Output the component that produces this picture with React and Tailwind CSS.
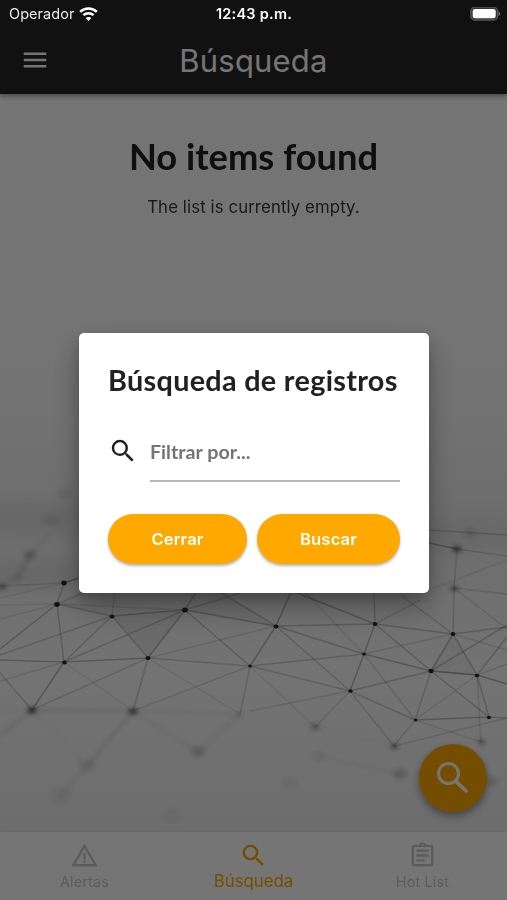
import React from 'react';
import { MdSearch, MdMenu, MdWarningAmber, MdOutlineAssignment } from 'react-icons/md';

const lines = [
  [0, 586, 64, 583, 0.3], [64, 583, 79, 578, 0.8], [64, 583, 57, 604, 0.4], [0, 598, 64, 583, 0.2],
  [0, 605, 57, 604, 0.2], [0, 649, 57, 604, 0.6], [0, 619, 57, 604, 0.25], [57, 604, 112, 616, 0.5],
  [57, 604, 90, 590, 0.3], [57, 604, 185, 610, 0.25], [57, 604, 64, 662, 0.5], [112, 616, 115, 592, 0.3],
  [112, 616, 185, 610, 0.6], [112, 616, 64, 662, 0.45], [112, 616, 148, 658, 0.45], [112, 616, 0, 655, 0.4],
  [185, 610, 148, 658, 0.6], [185, 610, 64, 662, 0.45], [185, 610, 250, 666, 0.5], [185, 610, 276, 626, 0.6],
  [185, 610, 196, 592, 0.5], [185, 610, 250, 590, 0.4], [220, 592, 276, 626, 0.45], [148, 658, 276, 626, 0.3],
  [0, 660, 64, 662, 0.6], [64, 662, 148, 658, 0.6], [148, 658, 250, 666, 0.4], [64, 662, 32, 710, 0.65],
  [0, 673, 32, 710, 0.4], [32, 710, 148, 658, 0.35], [148, 658, 133, 711, 0.45], [64, 662, 133, 711, 0.2],
  [0, 681, 64, 662, 0.25], [133, 711, 250, 666, 0.3], [250, 666, 240, 714, 0.35], [148, 658, 240, 714, 0.15],
  [250, 666, 276, 626, 0.65], [276, 626, 291, 592, 0.7], [276, 626, 375, 624, 0.5], [276, 626, 364, 654, 0.5],
  [276, 626, 350, 691, 0.4], [290, 590, 375, 624, 0.6], [305, 592, 364, 654, 0.25], [375, 624, 374, 592, 0.5],
  [375, 624, 364, 654, 0.6], [375, 624, 453, 634, 0.5], [375, 624, 431, 671, 0.5], [375, 624, 420, 600, 0.3],
  [364, 654, 350, 691, 0.65], [364, 654, 431, 671, 0.6], [364, 654, 250, 666, 0.4], [364, 654, 415, 720, 0.3],
  [364, 654, 453, 634, 0.3], [250, 666, 350, 691, 0.45], [350, 691, 431, 671, 0.5], [350, 691, 415, 720, 0.45],
  [350, 691, 315, 727, 0.3], [350, 691, 394, 746, 0.35], [350, 691, 250, 711, 0.3], [250, 666, 315, 727, 0.2],
  [431, 671, 453, 634, 0.6], [431, 671, 477, 675, 0.9], [431, 671, 507, 625, 0.5], [431, 671, 415, 720, 0.4],
  [431, 671, 489, 717, 0.5], [477, 675, 453, 634, 0.5], [477, 675, 507, 637, 0.5], [477, 675, 489, 717, 0.5],
  [477, 675, 507, 684, 0.7], [477, 675, 481, 742, 0.3], [415, 720, 489, 717, 0.6], [415, 720, 477, 675, 0.3],
  [415, 720, 394, 746, 0.3], [415, 720, 481, 742, 0.25], [394, 746, 507, 718, 0.3], [489, 717, 507, 718, 0.5],
  [454, 588, 453, 634, 0.4], [454, 588, 457, 549, 0.35], [454, 588, 507, 594, 0.3], [454, 588, 507, 629, 0.3],
  [453, 634, 507, 627, 0.5], [453, 634, 402, 596, 0.4], [453, 634, 507, 650, 0.25], [429, 543, 457, 549, 0.7],
  [429, 530, 507, 535, 0.4], [457, 549, 507, 556, 0.35], [429, 590, 507, 560, 0.2], [477, 675, 507, 664, 0.3],
];

const softLines = [
  [0, 710, 32, 710, 0.2], [32, 710, 133, 711, 0.4], [133, 711, 240, 714, 0.15], [133, 711, 87, 766, 0.4],
  [133, 711, 198, 752, 0.2], [240, 714, 198, 752, 0.25], [32, 710, 0, 736, 0.35], [32, 710, 87, 766, 0.1],
  [87, 766, 60, 796, 0.2], [30, 555, 18, 577, 0.5], [30, 555, 50, 535, 0.2], [0, 587, 18, 577, 0.4],
  [315, 727, 394, 746, 0.1], [318, 756, 400, 774, 0.1],
];

const nodes = [
  [64, 583, 2.8], [57, 604.5, 2.8], [112, 616.5, 2.4], [185, 610, 2.9], [148, 658, 2.5], [64.5, 662.5, 2.3],
  [250, 666, 1.8], [276, 626.5, 2.4], [375, 624, 2.3], [364, 654, 1.9], [431, 671, 2.6], [477, 675.5, 2.2],
  [350.5, 691, 2.2], [415.5, 720, 1.8], [489, 717.5, 2.1], [453, 634, 2.4],
];

// x, y, radius, opacity
const softNodes = [
  [32, 710.5, 4.5, 0.7], [133, 711.5, 4.5, 0.6], [240, 714, 4, 0.14], [198, 752, 7, 0.18], [87, 766, 8, 0.1],
  [60, 796, 11, 0.07], [30, 555, 6, 0.25], [18, 577, 4, 0.12], [2, 587, 4, 0.45], [457, 549, 4.5, 0.65],
  [454, 588.5, 4, 0.55], [470, 533, 6, 0.15], [51, 520, 8, 0.1], [66, 493, 8, 0.06], [315, 727, 5, 0.3],
  [394.5, 746.5, 4, 0.5], [481.5, 742, 3.5, 0.5], [400, 774, 7, 0.2], [318, 756, 6, 0.1], [290, 783, 9, 0.04],
  [492, 781, 6, 0.16], [172, 816, 11, 0.03],
];

const NetworkBackground = () => (
  <svg className="absolute inset-0 h-full w-full" viewBox="0 0 507 900" preserveAspectRatio="none">
    <defs>
      <linearGradient id="fade" x1="0" y1="0" x2="0" y2="1">
        <stop offset="0" stopColor="#fff" />
        <stop offset="0.45" stopColor="#fbfbfb" />
        <stop offset="0.57" stopColor="#ededed" />
        <stop offset="0.64" stopColor="#f1f1f1" />
        <stop offset="0.75" stopColor="#fbfbfb" />
        <stop offset="0.83" stopColor="#f5f5f5" />
        <stop offset="0.92" stopColor="#ededed" />
      </linearGradient>
      <filter id="soft" filterUnits="userSpaceOnUse" x="0" y="450" width="507" height="400">
        <feGaussianBlur stdDeviation="2" />
      </filter>
      <filter id="crisp" filterUnits="userSpaceOnUse" x="0" y="500" width="507" height="300">
        <feGaussianBlur stdDeviation="0.7" />
      </filter>
      <filter id="haze" filterUnits="userSpaceOnUse" x="-60" y="420" width="640" height="260">
        <feGaussianBlur stdDeviation="10" />
      </filter>
    </defs>
    <rect width="507" height="900" fill="url(#fade)" />
    <g filter="url(#haze)" fill="#000">
      <ellipse cx="40" cy="520" rx="70" ry="12" opacity="0.07" />
      <ellipse cx="40" cy="575" rx="80" ry="14" opacity="0.07" />
      <ellipse cx="470" cy="535" rx="60" ry="12" opacity="0.06" />
    </g>
    <path d="M57 604L90 586L220 592L276 626L185 610L112 616Z" fill="#000" opacity="0.04" />
    <path d="M185 610L148 658L112 616Z" fill="#000" opacity="0.06" />
    <path d="M453 634L431 671L477 675Z" fill="#000" opacity="0.04" />
    <g filter="url(#soft)" stroke="#555" strokeWidth="3">
      {softLines.map(([x1, y1, x2, y2, o], i) => (
        <line key={i} x1={x1} y1={y1} x2={x2} y2={y2} opacity={o * 0.45} />
      ))}
    </g>
    <g filter="url(#crisp)" stroke="#333" strokeWidth="1.5">
      {lines.map(([x1, y1, x2, y2, o], i) => (
        <line key={i} x1={x1} y1={y1} x2={x2} y2={y2} opacity={o * 0.48} />
      ))}
    </g>
    <g filter="url(#soft)" fill="#333">
      {softNodes.map(([x, y, r, o], i) => (
        <ellipse key={i} cx={x} cy={y} rx={r} ry={r * 0.7} opacity={o} />
      ))}
    </g>
    <g filter="url(#crisp)" fill="#2c2c2c">
      {nodes.map(([x, y, r], i) => (
        <ellipse key={i} cx={x} cy={y} rx={r} ry={r * 0.85} />
      ))}
    </g>
  </svg>
);

const StatusBar = () => (
  <div className="absolute inset-x-0 top-0 z-30 flex h-7 items-center justify-between pl-[9px] pr-[6px] text-white">
    <div className="flex flex-1 items-center gap-[5px]">
      <span className="text-[14.5px] tracking-[0.05px] text-[#e8e8e8]">Operador</span>
      <svg width="19" height="15" viewBox="0 0 19 15" fill="none" stroke="#fff" strokeWidth="2.5">
        <path d="M1.2 4.9C5.8 0.4 13.2 0.4 17.8 4.9" />
        <path d="M4.4 8.2C7.3 5.5 11.7 5.5 14.6 8.2" />
        <path d="M9.5 13.9L6.7 11C8.3 9.5 10.7 9.5 12.3 11Z" fill="#fff" stroke="none" />
      </svg>
    </div>
    <span className="pr-[2px] text-[14.5px] font-semibold tracking-[0.25px]">12:43 p.m.</span>
    <div className="flex flex-1 justify-end">
      <svg width="31" height="15" viewBox="0 0 31 15">
        <rect x="0.8" y="0.2" width="26.8" height="12.8" rx="4" fill="#333" stroke="#555" strokeWidth="1.3" />
        <rect x="2.7" y="2" width="23" height="9.2" rx="2.3" fill="#fff" />
        <path d="M28.6 4.5C30.8 5.3 30.8 8.1 28.6 8.9Z" fill="#777" />
      </svg>
    </div>
  </div>
);

const tabs = [
  { label: 'Alertas', icon: MdWarningAmber },
  { label: 'Búsqueda', icon: MdSearch, active: true },
  { label: 'Hot List', icon: MdOutlineAssignment },
];

const App = () => {
  return (
    <div className="relative flex h-[900px] w-[507px] flex-col overflow-hidden bg-white font-['Inter',sans-serif]">
      <NetworkBackground />
      <StatusBar />

      {/* App bar */}
      <header className="relative flex h-[94px] shrink-0 items-center bg-[#252525] px-5 pt-[26px] text-white shadow-[0_2px_5px_rgba(0,0,0,0.4)]">
        <MdMenu className="h-[30px] w-[30px]" />
        <h1 className="flex-1 pr-[30px] text-center text-[31px] leading-none tracking-[0.2px]">Búsqueda</h1>
      </header>

      {/* Empty list */}
      <main className="relative flex flex-1 flex-col items-center pt-[39px]">
        <h2 className="font-['Lato',sans-serif] text-[36.3px] font-bold leading-[46px] text-[#212121]">
          No items found
        </h2>
        <p className="mt-[16px] text-[16.8px] leading-6 tracking-[0.1px] text-[#383838]">The list is currently empty.</p>
        <button className="absolute bottom-5 right-5 flex h-[68px] w-[68px] items-center justify-center rounded-full bg-[#ffa900] text-white shadow-[0_4px_9px_rgba(0,0,0,0.4)]">
          <svg width="34" height="34" viewBox="0 0 34 34" fill="none" stroke="currentColor" strokeWidth="3">
            <circle cx="12.5" cy="12.6" r="10" />
            <path d="M20 20.3L30 30" strokeWidth="3.8" strokeLinecap="round" />
          </svg>
        </button>
      </main>

      {/* Bottom tabs */}
      <nav className="relative grid h-[68px] shrink-0 grid-cols-3 bg-white shadow-[0_-1px_3px_rgba(0,0,0,0.06)]">
        {tabs.map(({ label, icon: Icon, active }) => (
          <div
            key={label}
            className={`flex flex-col items-center pt-[9px] ${active ? 'text-[#ffa900]' : 'text-[#c8c8c8]'}`}
          >
            <Icon className="h-[29px] w-[29px]" />
            <span
              className={
                active
                  ? 'text-[16.8px] leading-[22px]'
                  : 'text-[14.3px] leading-[24px] tracking-[0.2px]'
              }
            >
              {label}
            </span>
          </div>
        ))}
      </nav>

      {/* Search dialog */}
      <div className="absolute inset-0 z-20 bg-black/54 pl-[79px] pt-[333px]">
        <div className="h-[260px] w-[350px] rounded-[5px] bg-white px-[29px] pt-[30px] shadow-[0_14px_30px_rgba(0,0,0,0.3),0_6px_12px_rgba(0,0,0,0.15)]">
          <h3 className="whitespace-nowrap font-['Lato',sans-serif] text-[28.8px] font-bold leading-[35px] tracking-[0.3px] text-[#212121]">
            Búsqueda de registros
          </h3>
          <div className="mt-[23px] flex">
            <MdSearch className="mt-[15px] h-[30px] w-[30px] text-[#212121]" />
            <div className="ml-[12px] h-[61px] flex-1 border-b-2 border-[#b8b8b8] pt-[19px] font-['Lato',sans-serif] text-[19.7px] font-bold leading-6 text-[#757575]">
              Filtrar por...
            </div>
          </div>
          <div className="mt-[32px] flex gap-[10px]">
            <button className="h-[50px] w-[139px] rounded-full bg-[#ffa900] pt-px text-[16.6px] font-semibold tracking-[0.15px] text-white shadow-[0_2px_3px_rgba(0,0,0,0.3)]">
              Cerrar
            </button>
            <button className="h-[50px] w-[143px] rounded-full bg-[#ffa900] pt-px text-[16.6px] font-semibold tracking-[0.15px] text-white shadow-[0_2px_3px_rgba(0,0,0,0.3)]">
              Buscar
            </button>
          </div>
        </div>
      </div>
    </div>
  );
};

export default App;
